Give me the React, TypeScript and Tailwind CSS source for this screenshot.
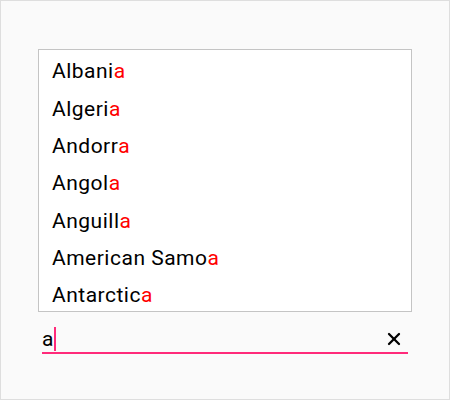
import { X } from "lucide-react";

const countries = [
  "Albani",
  "Algeri",
  "Andorr",
  "Angol",
  "Anguill",
  "American Samo",
  "Antarctic",
];

export default function App() {
  return (
    <div
      className="w-[450px] h-[400px] bg-[#fafafa] border border-[#dedede] pt-[48px] px-[37px]"
      style={{ fontFamily: "Roboto, 'Liberation Sans', sans-serif" }}
    >
      <ul className="h-[263px] bg-white border-[1.5px] border-[#c4c4c4] overflow-hidden">
        {countries.map((c) => (
          <li
            key={c}
            className="h-[37.3px] pl-[13px] pt-[7px] flex items-center text-[21px] tracking-[0.5px] text-black"
          >
            {c}
            <span className="text-[#ff0000]">a</span>
          </li>
        ))}
      </ul>
      <div className="mt-[12px] ml-[4px] mr-[4px] flex items-center h-[30px] pt-[2px] border-b-2 border-[#ff2a7a]">
        <span className="text-[21px] text-black leading-none">a</span>
        <span className="w-[2px] h-[24px] bg-[#ff2a7a] ml-[1px]" />
        <span className="flex-1" />
        <X className="w-[20px] h-[20px] mr-[4px] text-black" strokeWidth={2.75} />
      </div>
    </div>
  );
}
